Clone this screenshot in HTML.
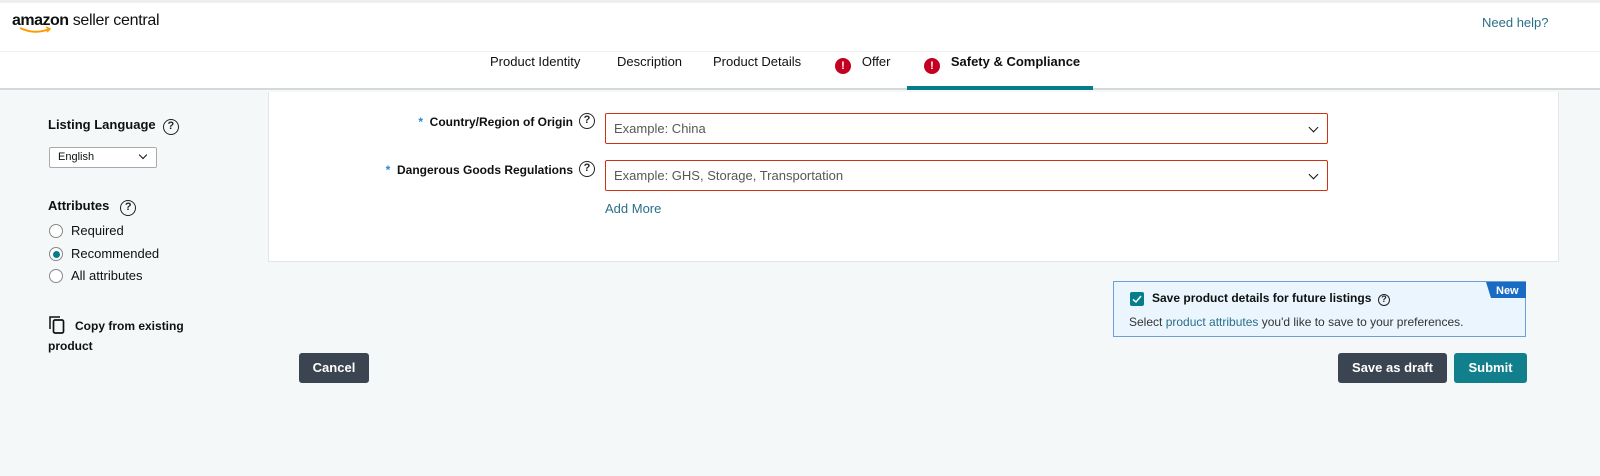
<!DOCTYPE html>
<html><head><meta charset="utf-8"><style>
*{box-sizing:border-box;margin:0;padding:0}
body{width:1600px;height:476px;background:#f5f8f9;font-family:"Liberation Sans",Arial,sans-serif;color:#0f1111;position:relative;overflow:hidden}
.a{position:absolute}
.hdr{left:0;top:0;width:1600px;height:90px;background:#fff;border-bottom:2px solid #d5d9d9;border-top:3px solid #eee}
.q{display:inline-block;width:16px;height:16px;border:1.5px solid #222;border-radius:50%;font-size:11px;font-weight:bold;text-align:center;line-height:13px;color:#222}
.tab{top:54px;font-size:13px;color:#0f1111;white-space:nowrap}
.ex{display:inline-block;width:16px;height:16px;border-radius:50%;background:#c40022;color:#fff;font-size:11px;font-weight:bold;text-align:center;line-height:16px;vertical-align:-3px}
.sel{border:1px solid #d13212;background:#fff;height:31px;border-radius:2px;font-size:13px;color:#565959;padding:7px 8px}
.chev{position:absolute;right:10px;top:10px;width:7px;height:7px;border-right:1.8px solid #111;border-bottom:1.8px solid #111;transform:rotate(45deg)}
.lbl{font-size:12px;font-weight:bold;text-align:right;white-space:nowrap}
.radio{width:14px;height:14px;border:1px solid #888;border-radius:50%;background:#fff}
.btn{height:30px;border-radius:3px;color:#fff;font-size:13px;font-weight:bold;text-align:center;line-height:30px}
</style></head><body>
<div class="a hdr"></div>
<div class="a" style="left:12px;top:12px;font-size:16px;"><b style="letter-spacing:-0.5px">amazon</b><span style="font-size:16px;letter-spacing:-0.3px"> seller central</span></div>
<svg class="a" style="left:19px;top:26px" width="34" height="9"><path d="M1 2 Q16 9 30 3" stroke="#f90" stroke-width="2" fill="none"/><path d="M27 1 L31 3 L28 6" stroke="#f90" stroke-width="1.5" fill="none"/></svg>
<div class="a" style="left:1482px;top:15px;font-size:13px;color:#2a6f8a">Need help?</div>
<div class="a" style="left:0;top:51px;width:1600px;border-top:1px solid #f2f2f2"></div>
<div class="a tab" style="left:490px">Product Identity</div>
<div class="a tab" style="left:617px">Description</div>
<div class="a tab" style="left:713px">Product Details</div>
<div class="a tab" style="left:835px"><span class="ex">!</span>&nbsp;&nbsp;&nbsp;Offer</div>
<div class="a tab" style="left:924px;font-weight:bold"><span class="ex">!</span>&nbsp;&nbsp;&nbsp;Safety &amp; Compliance</div>
<div class="a" style="left:907px;top:86px;width:186px;height:4px;background:#067d8a"></div>

<div class="a" style="left:48px;top:117px;font-size:13px;font-weight:bold">Listing Language &nbsp;<span class="q">?</span></div>
<div class="a" style="left:49px;top:147px;width:108px;height:21px;border:1px solid #aaa;border-radius:2px;background:#fff;font-size:11px;padding:3px 8px">English<span class="chev" style="right:10px;top:4px;width:6px;height:6px"></span></div>
<div class="a" style="left:48px;top:198px;font-size:13px;font-weight:bold">Attributes &nbsp;&nbsp;<span class="q">?</span></div>
<div class="a radio" style="left:49px;top:224px"></div>
<div class="a" style="left:71px;top:223px;font-size:13px">Required</div>
<div class="a radio" style="left:49px;top:247px;border-color:#888"><div style="width:7px;height:7px;border-radius:50%;background:#067d8a;margin:2.5px"></div></div>
<div class="a" style="left:71px;top:246px;font-size:13px">Recommended</div>
<div class="a radio" style="left:49px;top:269px"></div>
<div class="a" style="left:71px;top:268px;font-size:13px">All attributes</div>
<svg class="a" style="left:49px;top:316px" width="16" height="18"><path d="M1 13 V1 H11" stroke="#111" stroke-width="1.5" fill="none"/><rect x="4.5" y="4" width="10" height="13" rx="1.5" stroke="#111" stroke-width="1.7" fill="none"/></svg>
<div class="a" style="left:75px;top:319px;font-size:12px;font-weight:bold">Copy from existing</div>
<div class="a" style="left:48px;top:339px;font-size:12px;font-weight:bold">product</div>

<div class="a" style="left:268px;top:92px;width:1291px;height:170px;background:#fff;border:1px solid #e3e6e6;border-top:none"></div>
<div class="a lbl" style="right:1027px;top:115px"><span style="color:#2a8ad5">*</span> &nbsp;Country/Region of Origin</div>
<span class="a q" style="left:579px;top:113px">?</span>
<div class="a lbl" style="right:1027px;top:163px"><span style="color:#2a8ad5">*</span> &nbsp;Dangerous Goods Regulations</div>
<span class="a q" style="left:579px;top:161px">?</span>
<div class="a sel" style="left:605px;top:113px;width:723px">Example: China<span class="chev"></span></div>
<div class="a sel" style="left:605px;top:160px;width:723px">Example: GHS, Storage, Transportation<span class="chev"></span></div>
<div class="a" style="left:605px;top:201px;font-size:13px;color:#2a6f8a">Add More</div>

<div class="a" style="left:1113px;top:281px;width:413px;height:56px;background:#eaf5fd;border:1px solid #6b9fd8"></div>
<svg class="a" style="left:1486px;top:282px" width="40" height="16"><path d="M0 0 H40 V16 H5 Z" fill="#1a6bc4"/><text x="10" y="12" fill="#fff" font-size="11" font-weight="bold" font-family="Liberation Sans">New</text></svg>
<div class="a" style="left:1130px;top:292px;width:14px;height:14px;background:#067d8a;border-radius:2px"><svg width="14" height="14"><path d="M3 7.5 L6 10 L11 4" stroke="#fff" stroke-width="1.5" fill="none"/></svg></div>
<div class="a" style="left:1152px;top:291px;font-size:12px;font-weight:bold">Save product details for future listings &nbsp;<span class="q" style="width:12px;height:12px;font-size:9px;line-height:9px;border-width:1px">?</span></div>
<div class="a" style="left:1129px;top:315px;font-size:12px;color:#333">Select <span style="color:#2a6f8a">product attributes</span> you'd like to save to your preferences.</div>

<div class="a btn" style="left:299px;top:353px;width:70px;background:#3b4551">Cancel</div>
<div class="a btn" style="left:1338px;top:353px;width:109px;background:#3b4551">Save as draft</div>
<div class="a btn" style="left:1454px;top:353px;width:73px;background:#11808c">Submit</div>
</body></html>
